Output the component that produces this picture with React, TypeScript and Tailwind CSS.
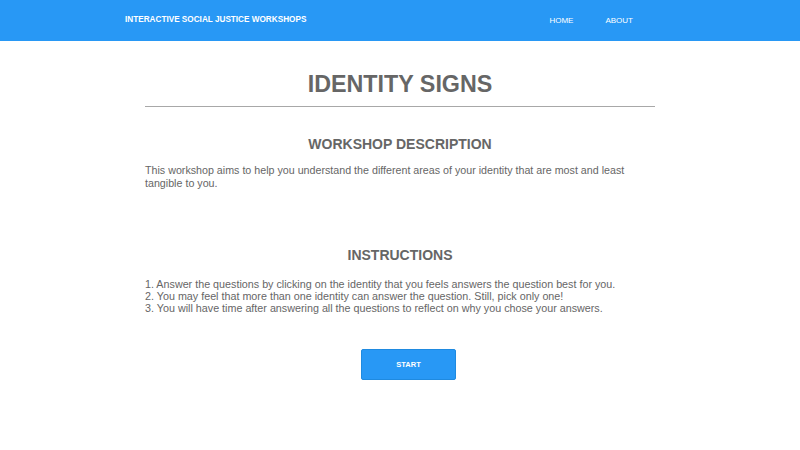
import React from 'react';

const instructions = [
  '1. Answer the questions by clicking on the identity that you feels answers the question best for you.',
  '2. You may feel that more than one identity can answer the question. Still, pick only one!',
  '3. You will have time after answering all the questions to reflect on why you chose your answers.',
];

export default function App() {
  return (
    <div className="w-[800px] h-[450px] bg-white overflow-hidden font-['Liberation_Sans',Arial,sans-serif] text-[#666666]">
      {/* nav bar */}
      <header className="h-[41px] bg-[#2898f5] flex items-center justify-between pl-[125px] pr-[167px]">
        <span className="text-white font-bold text-[8.2px]">INTERACTIVE SOCIAL JUSTICE WORKSHOPS</span>
        <nav className="flex gap-[32px] text-white text-[8px]">
          <span>HOME</span>
          <span>ABOUT</span>
        </nav>
      </header>

      <main className="w-[510px] mx-auto flex flex-col">
        <h1 className="mt-[29px] text-center font-bold text-[23.3px] leading-[28px]">IDENTITY SIGNS</h1>
        <hr className="mt-[8px] border-0 h-px bg-[#a8a8a8]" />

        <h2 className="mt-[29px] text-center font-bold text-[14px] leading-[16px]">WORKSHOP DESCRIPTION</h2>
        <p className="mt-[12px] text-[10.7px] leading-[13px]">
          This workshop aims to help you understand the different areas of your identity that are most and least tangible to you.
        </p>

        <h2 className="mt-[57px] text-center font-bold text-[14px] leading-[16px]">INSTRUCTIONS</h2>
        <div className="mt-[15px] text-[10.75px] leading-[12px]">
          {instructions.map((line) => (
            <p key={line}>{line}</p>
          ))}
        </div>

        <button className="mt-[35px] self-start ml-[216px] w-[95px] h-[31px] rounded-[2px] bg-[#2898f5] border border-[#1f8ae0] text-white font-bold text-[7.5px]">
          START
        </button>
      </main>
    </div>
  );
}
